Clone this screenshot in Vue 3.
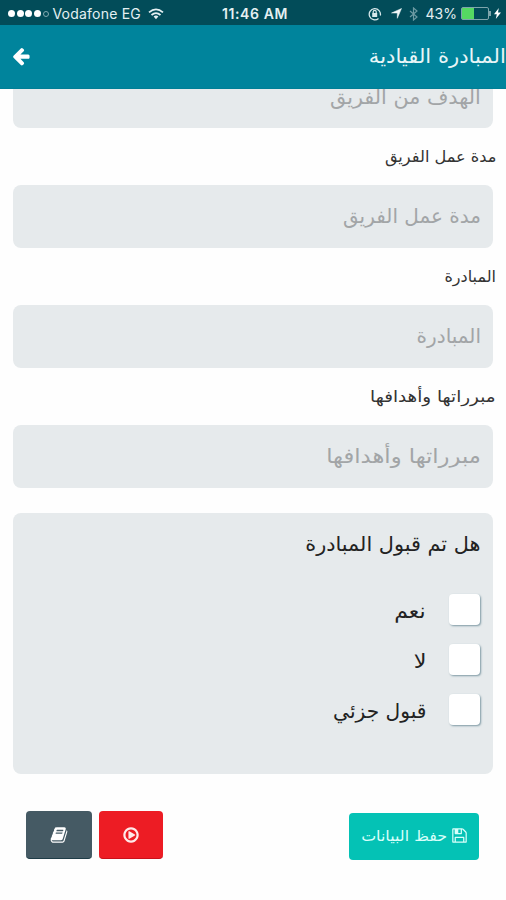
<template>
  <div class="screen">
    <div class="status-bar">
      <div class="carrier">
        <span v-for="n in 4" :key="n" class="dot"></span>
        <span class="dot empty"></span>
        <span class="carrier-name">Vodafone EG</span>
        <svg class="wifi" viewBox="0 0 16 12" fill="none" stroke="#e4f0f2" stroke-width="1.8">
          <path d="M1 4.4Q8-1.600 15 4.4M3.500 7Q8 3.2 12.500 7" />
          <path d="M5.600 8.600Q8 6.600 10.400 8.600L8 11.300z" fill="#e4f0f2" stroke="none" />
        </svg>
      </div>
      <div class="clock">11:46 AM</div>
      <div class="indicators">
        <svg width="14" height="14" viewBox="0 0 14 14" fill="none" stroke="#d6e7ea">
          <path d="M10.500 11.500A5.600 5.600 0 1 1 12.300 8.500" stroke-width="1.300" />
          <path d="M5.200 6V4.800a1.500 1.500 0 0 1 3 0V6" stroke-width="1.200" />
          <path d="M4.200 6h5v4h-5z" fill="#d6e7ea" stroke="none" />
        </svg>
        <svg class="location" width="11" height="11" viewBox="0 0 11 11" fill="#f2f8f9" stroke="#f2f8f9" stroke-width=".5">
          <path d="M10.500.500L6.300 10.300V5H.5z" />
        </svg>
        <svg class="bluetooth" width="9" height="14" viewBox="0 0 9 14" fill="none" stroke="#6d9ba3" stroke-width="1.200">
          <path d="M1 4l7 6-3.500 3V1L8 4l-7 6" />
        </svg>
        <span class="percent">43%</span>
        <span class="battery"><span class="battery-level"></span></span>
        <span class="battery-cap"></span>
        <svg class="bolt" width="7" height="11" viewBox="0 0 7 11" fill="#fff">
          <path d="M4.800 0L0 6.200h2.800L1.800 11 7 4.500H4z" />
        </svg>
      </div>
    </div>

    <header class="nav-bar">
      <svg class="back" viewBox="0 0 1792 1792" fill="#fff"><path :d="icons.arrow" /></svg>
      <h1><span class="fit">المبادرة القيادية</span></h1>
    </header>

    <main dir="rtl">
      <div class="field first"><span class="fit">الهدف من الفريق</span></div>
      <template v-for="f in fields" :key="f.text">
        <label><span class="fit" :style="{ transform: `scaleX(${f.label})` }">{{ f.text }}</span></label>
        <div class="field"><span class="fit" :style="{ transform: `scaleX(${f.hint})` }">{{ f.text }}</span></div>
      </template>

      <section class="question">
        <h2><span class="fit">هل تم قبول المبادرة</span></h2>
        <div v-for="o in options" :key="o.text" class="option">
          <span class="box"></span>
          <span class="fit" :style="{ transform: `scaleX(${o.scale})` }">{{ o.text }}</span>
        </div>
      </section>

      <footer>
        <button class="save">
          <svg viewBox="0 0 1792 1792" fill="#d8fffa"><path :d="icons.floppy" /></svg>
          <span class="fit">حفظ البيانات</span>
        </button>
        <div class="actions">
          <button class="play"><svg viewBox="0 0 1792 1792" fill="#ffe9e9"><path :d="icons.play" /></svg></button>
          <button class="book"><svg viewBox="0 0 1792 1792" fill="#fff"><path :d="icons.book" /></svg></button>
        </div>
      </footer>
    </main>
  </div>
</template>

<script setup>
// label and hint are horizontal scale factors for the Arabic face
const fields = [
  { text: 'مدة عمل الفريق', label: 1.01, hint: 1 },
  { text: 'المبادرة', label: 1, hint: 1 },
  { text: 'مبرراتها وأهدافها', label: 1.145, hint: 1.13 }
]

const options = [
  { text: 'نعم', scale: 1.1 },
  { text: 'لا', scale: 1.12 },
  { text: 'قبول جزئي', scale: 1.01 }
]

const icons = {
  arrow: 'M1664 896v128q0 53-32.5 90.5t-84.5 37.5h-704l293 294q38 36 38 90t-38 90l-75 76q-37 37-90 37-52 0-91-37l-651-652q-37-37-37-90 0-52 37-91l651-650q38-38 91-38 52 0 90 38l75 74q38 38 38 91t-38 91l-293 293h704q52 0 84.5 37.5t32.5 90.5z',
  play: 'M1312 896q0 37-32 55l-544 320q-15 9-32 9-16 0-32-8-32-19-32-56v-640q0-37 32-56 33-18 64 1l544 320q32 18 32 55zm128 0q0-148-73-273t-198-198-273-73-273 73-198 198-73 273 73 273 198 198 273 73 273-73 198-198 73-273zm224 0q0 209-103 385.5t-279.5 279.5-385.5 103-385.5-103-279.5-279.5-103-385.5 103-385.5 279.5-279.5 385.5-103 385.5 103 279.5 279.5 103 385.5z',
  floppy: 'M512 1536h768v-384h-768v384zm896 0h128v-896q0-14-10-38.5t-20-34.5l-281-281q-10-10-34-20t-39-10v416q0 40-28 68t-68 28h-576q-40 0-68-28t-28-68v-416h-128v1280h128v-416q0-40 28-68t68-28h832q40 0 68 28t28 68v416zm-384-928v-320q0-13-9.5-22.5t-22.5-9.5h-192q-13 0-22.5 9.5t-9.5 22.5v320q0 13 9.5 22.5t22.5 9.5h192q13 0 22.5-9.5t9.5-22.5zm640 32v928q0 40-28 68t-68 28h-1344q-40 0-68-28t-28-68v-1344q0-40 28-68t68-28h928q40 0 88 20t76 48l280 280q28 28 48 76t20 88z',
  book: 'M1703 478q40 57 18 129l-275 906q-19 64-76.5 107.5t-122.5 43.5h-923q-77 0-148.5-53.5t-99.5-131.5q-24-67-2-127 0-4 3-27t4-37q1-8-3-21.5t-3-19.5q2-11 8-21t16.5-23.5 16.5-23.5q23-38 45-91.5t30-91.5q3-10 .5-30t-.5-28q3-11 17-28t17-23q21-36 42-92t25-90q1-9-2.5-32t.5-28q4-13 22-30.5t22-22.5q19-26 42.5-84.5t27.5-96.5q1-8-3-25.5t-2-26.5q2-8 9-18t18-23 17-21q8-12 16.5-30.5t15-35 16-36 19.5-32 26.5-23.5 36-11.5 47.5 5.5l-1 3q38-9 51-9h761q74 0 114 56t18 130l-274 906q-36 119-71.5 153.5t-128.5 34.5h-869q-27 0-38 15-11 16-1 43 24 70 144 70h923q29 0 56-15.5t35-41.5l300-987q7-22 5-57 38 15 59 43zm-1064 2q-4 13 2 22.5t20 9.5h608q13 0 25.5-9.5t16.5-22.5l21-64q4-13-2-22.5t-20-9.5h-608q-13 0-25.5 9.5t-16.5 22.5zm-83 256q-4 13 2 22.5t20 9.5h608q13 0 25.5-9.5t16.5-22.5l21-64q4-13-2-22.5t-20-9.5h-608q-13 0-25.5 9.5t-16.5 22.5z'
}
</script>

<style>
body {
  margin: 0;
  background: #fefefe;
}
</style>

<style scoped>
.screen {
  height: 900px;
  overflow: hidden;
  background: #fefefe;
  font-family: 'DejaVu Sans', sans-serif;
}

.fit {
  display: inline-block;
  white-space: nowrap;
  transform-origin: right center;
}

.status-bar {
  display: grid;
  grid-template-columns: 1fr auto 1fr;
  align-items: center;
  height: 25px;
  box-sizing: border-box;
  padding: 2px 5px 0 8px;
  background: #024c59;
  color: #e4f0f2;
  font-family: Inter, 'Liberation Sans', sans-serif;
  font-size: 14px;
}

.carrier,
.indicators {
  display: flex;
  align-items: center;
}

.indicators {
  justify-content: flex-end;
}

.dot {
  width: 7px;
  height: 7px;
  margin-right: 1.7px;
  border-radius: 50%;
  background: #fff;
}

.dot.empty {
  box-sizing: border-box;
  width: 6px;
  height: 6px;
  background: none;
  border: 1px solid #84aab1;
}

.carrier-name {
  margin-left: 2px;
  letter-spacing: 0.22px;
}

.wifi {
  width: 16px;
  height: 12px;
  margin-left: 7px;
}

.clock {
  padding-left: 1px;
  font-weight: 600;
  letter-spacing: 0.6px;
}

.location {
  margin-left: 9px;
}

.bluetooth {
  margin-left: 7px;
}

.percent {
  margin-left: 8px;
}

.battery {
  box-sizing: border-box;
  width: 28px;
  height: 13px;
  margin-left: 4px;
  border: 1px solid #7fa5ac;
  border-radius: 2px;
}

.battery-level {
  display: block;
  width: 12px;
  height: 11px;
  background: #55d962;
}

.battery-cap {
  width: 2px;
  height: 5px;
  background: #7fa5ac;
}

.bolt {
  margin-left: 3px;
}

.nav-bar {
  display: flex;
  align-items: center;
  justify-content: space-between;
  height: 64px;
  box-sizing: border-box;
  padding: 0 0 2px 11px;
  background: #00849c;
  border-bottom: 1px solid #007f96;
}

.back {
  width: 20px;
  height: 20px;
}

h1 {
  margin: 0;
  color: #e8f5f7;
  font-size: 20px;
  font-weight: normal;
}

h1 .fit {
  transform: scaleX(1.055);
}

.field {
  display: flex;
  align-items: center;
  box-sizing: border-box;
  height: 63px;
  margin: 0 13px;
  padding: 0 12px 2px;
  border-radius: 8px;
  background: #e6eaec;
  color: #a2a5a7;
  font-size: 20px;
}

/* scrolled partly under the nav bar */
.field.first {
  height: 39px;
  padding-bottom: 24px;
  border-radius: 0 0 8px 8px;
  overflow: hidden;
}

.field.first .fit {
  transform: scaleX(1.035);
}

label {
  display: flex;
  align-items: center;
  height: 57px;
  padding-right: 10px;
  color: #333;
  font-size: 16px;
}

.question {
  box-sizing: border-box;
  height: 261px;
  margin: 25px 13px 0;
  padding: 14px 13px;
  border-radius: 8px;
  background: #e6eaec;
  color: #222;
}

h2 {
  height: 34px;
  margin: 0 0 32px;
  font-size: 20px;
  font-weight: normal;
  line-height: 34px;
}

h2 .fit {
  transform: scaleX(1.04);
}

.option {
  display: flex;
  align-items: center;
  gap: 23px;
  height: 32px;
  margin-bottom: 18px;
  font-size: 20px;
}

.option .fit {
  padding-top: 4px;
}

.box {
  width: 31px;
  height: 31px;
  border-radius: 4px;
  background: #fff;
  box-shadow: 1px 1px 2px #7f9aa5;
}

footer {
  display: flex;
  align-items: flex-start;
  justify-content: space-between;
  padding: 37px 27px 0 26px;
}

button {
  display: flex;
  align-items: center;
  justify-content: center;
  border: 0;
  border-radius: 4px;
  font-family: inherit;
}

button svg {
  flex: none;
  width: 18px;
  height: 18px;
}

.save {
  justify-content: flex-start;
  gap: 4px;
  width: 130px;
  height: 47px;
  margin-top: 2px;
  padding: 0 11px 2px 0;
  background: #04c2b5;
  color: #d8fffa;
  font-size: 15px;
}

.save svg {
  width: 17px;
  height: 17px;
}

.save .fit {
  transform: scaleX(1.06);
}

.actions {
  display: flex;
  gap: 7px;
}

.play {
  width: 64px;
  height: 48px;
  background: #ed1c24;
  border-bottom: 1px solid #c9101a;
}

.book {
  width: 66px;
  height: 48px;
  background: #455a64;
  border-bottom: 1px solid #1e3c47;
}
</style>
